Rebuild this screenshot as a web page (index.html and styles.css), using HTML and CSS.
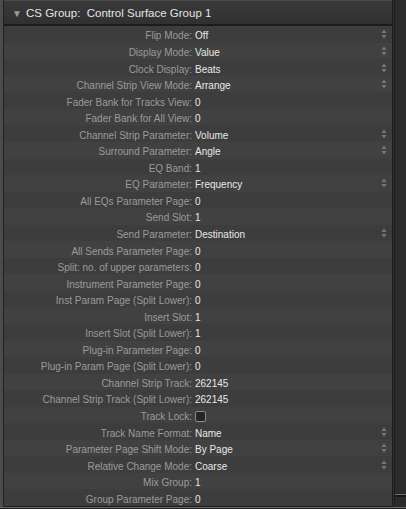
FILE: index.html
```html
<!DOCTYPE html>
<html>
<head>
<meta charset="utf-8">
<link rel="stylesheet" href="styles.css">
</head>
<body>
<div class="window">
  <div class="panel">
    <div class="header"><span class="tri">&#9660;</span><span class="title">CS Group:&nbsp; Control Surface Group 1</span></div>
    <div class="rows">
      <div class="row"><span class="lbl">Flip Mode:</span><span class="val">Off</span><span class="step"><svg width="6" height="10" viewBox="0 0 6 10"><path d="M3 0.5 L5.5 4 H0.5 Z M3 9.5 L5.5 6 H0.5 Z" fill="#777"/></svg></span></div>
      <div class="row"><span class="lbl">Display Mode:</span><span class="val">Value</span><span class="step"><svg width="6" height="10" viewBox="0 0 6 10"><path d="M3 0.5 L5.5 4 H0.5 Z M3 9.5 L5.5 6 H0.5 Z" fill="#777"/></svg></span></div>
      <div class="row"><span class="lbl">Clock Display:</span><span class="val">Beats</span><span class="step"><svg width="6" height="10" viewBox="0 0 6 10"><path d="M3 0.5 L5.5 4 H0.5 Z M3 9.5 L5.5 6 H0.5 Z" fill="#777"/></svg></span></div>
      <div class="row"><span class="lbl">Channel Strip View Mode:</span><span class="val">Arrange</span><span class="step"><svg width="6" height="10" viewBox="0 0 6 10"><path d="M3 0.5 L5.5 4 H0.5 Z M3 9.5 L5.5 6 H0.5 Z" fill="#777"/></svg></span></div>
      <div class="row"><span class="lbl">Fader Bank for Tracks View:</span><span class="val">0</span></div>
      <div class="row"><span class="lbl">Fader Bank for All View:</span><span class="val">0</span></div>
      <div class="row"><span class="lbl">Channel Strip Parameter:</span><span class="val">Volume</span><span class="step"><svg width="6" height="10" viewBox="0 0 6 10"><path d="M3 0.5 L5.5 4 H0.5 Z M3 9.5 L5.5 6 H0.5 Z" fill="#777"/></svg></span></div>
      <div class="row"><span class="lbl">Surround Parameter:</span><span class="val">Angle</span><span class="step"><svg width="6" height="10" viewBox="0 0 6 10"><path d="M3 0.5 L5.5 4 H0.5 Z M3 9.5 L5.5 6 H0.5 Z" fill="#777"/></svg></span></div>
      <div class="row"><span class="lbl">EQ Band:</span><span class="val">1</span></div>
      <div class="row"><span class="lbl">EQ Parameter:</span><span class="val">Frequency</span><span class="step"><svg width="6" height="10" viewBox="0 0 6 10"><path d="M3 0.5 L5.5 4 H0.5 Z M3 9.5 L5.5 6 H0.5 Z" fill="#777"/></svg></span></div>
      <div class="row"><span class="lbl">All EQs Parameter Page:</span><span class="val">0</span></div>
      <div class="row"><span class="lbl">Send Slot:</span><span class="val">1</span></div>
      <div class="row"><span class="lbl">Send Parameter:</span><span class="val">Destination</span><span class="step"><svg width="6" height="10" viewBox="0 0 6 10"><path d="M3 0.5 L5.5 4 H0.5 Z M3 9.5 L5.5 6 H0.5 Z" fill="#777"/></svg></span></div>
      <div class="row"><span class="lbl">All Sends Parameter Page:</span><span class="val">0</span></div>
      <div class="row"><span class="lbl">Split: no. of upper parameters:</span><span class="val">0</span></div>
      <div class="row"><span class="lbl">Instrument Parameter Page:</span><span class="val">0</span></div>
      <div class="row"><span class="lbl">Inst Param Page (Split Lower):</span><span class="val">0</span></div>
      <div class="row"><span class="lbl">Insert Slot:</span><span class="val">1</span></div>
      <div class="row"><span class="lbl">Insert Slot (Split Lower):</span><span class="val">1</span></div>
      <div class="row"><span class="lbl">Plug-in Parameter Page:</span><span class="val">0</span></div>
      <div class="row"><span class="lbl">Plug-in Param Page (Split Lower):</span><span class="val">0</span></div>
      <div class="row"><span class="lbl">Channel Strip Track:</span><span class="val">262145</span></div>
      <div class="row"><span class="lbl">Channel Strip Track (Split Lower):</span><span class="val">262145</span></div>
      <div class="row"><span class="lbl">Track Lock:</span><span class="val"><span class="check"></span></span></div>
      <div class="row"><span class="lbl">Track Name Format:</span><span class="val">Name</span><span class="step"><svg width="6" height="10" viewBox="0 0 6 10"><path d="M3 0.5 L5.5 4 H0.5 Z M3 9.5 L5.5 6 H0.5 Z" fill="#777"/></svg></span></div>
      <div class="row"><span class="lbl">Parameter Page Shift Mode:</span><span class="val">By Page</span><span class="step"><svg width="6" height="10" viewBox="0 0 6 10"><path d="M3 0.5 L5.5 4 H0.5 Z M3 9.5 L5.5 6 H0.5 Z" fill="#777"/></svg></span></div>
      <div class="row"><span class="lbl">Relative Change Mode:</span><span class="val">Coarse</span><span class="step"><svg width="6" height="10" viewBox="0 0 6 10"><path d="M3 0.5 L5.5 4 H0.5 Z M3 9.5 L5.5 6 H0.5 Z" fill="#777"/></svg></span></div>
      <div class="row"><span class="lbl">Mix Group:</span><span class="val">1</span></div>
      <div class="row"><span class="lbl">Group Parameter Page:</span><span class="val">0</span></div>
    </div>
  </div>
  <div class="strip"><div class="strip-end"></div></div>
</div>
</body>
</html>
```

FILE: styles.css
```css
html, body {
  margin: 0;
  padding: 0;
  background: #1e1e1e;
}
body {
  width: 406px;
  height: 509px;
  overflow: hidden;
  font-family: "Liberation Sans", Arial, sans-serif;
}
.window {
  display: flex;
  height: 507px;
  border-bottom: 1px solid #6a6a6a;
}
.panel {
  width: 389px;
  border-left: 3px solid #4c4c4c;
  box-shadow: inset 1px 0 0 #1f1f1f;
  border-right: 1px solid #1b1b1b;
  background: #3c3c3c;
  display: flex;
  flex-direction: column;
}
.header {
  height: 24px;
  border-top: 1px solid #4a4a4a;
  border-bottom: 2px solid #1c1c1c;
  background: linear-gradient(#3a3a3a, #303030);
  display: flex;
  align-items: center;
  padding-left: 8px;
  margin-left: 1px;
  color: #e4e4e4;
}
.tri {
  font-size: 10px;
  color: #9a9a9a;
  width: 14px;
  margin-top: 1px;
}
.title {
  font-size: 11.5px;
  white-space: pre;
}
.rows {
  margin-left: 1px;
  border-bottom: 1px solid #1c1c1c;
}
.row {
  box-sizing: border-box;
  height: 16.55px;
  padding-top: 3px;
  display: grid;
  grid-template-columns: 188px 1fr 16px;
  align-items: center;
  font-size: 10px;
  background: #3d3d3d;
}
.row:nth-child(even) {
  background: #414141;
}
.lbl {
  text-align: right;
  color: #9b9b9b;
  white-space: nowrap;
}
.val {
  color: #e8e8e8;
  padding-left: 3px;
  white-space: nowrap;
  display: flex;
  align-items: center;
}
.step {
  grid-column: 3;
  display: flex;
  justify-content: center;
  align-items: center;
  margin-top: -3px;
}
.step svg {
  display: block;
}
.check {
  display: inline-block;
  width: 9px;
  height: 9px;
  border: 1px solid #8a8a8a;
  border-radius: 2px;
  background: #262626;
}
.strip {
  flex: 1;
  border-left: 1px solid #2f2f2f;
  box-shadow: inset 1px 0 0 #1d1d1d;
  background: #2b2b2b;
  position: relative;
}
.strip-end {
  position: absolute;
  left: 1px;
  right: 0;
  top: 494px;
  height: 1px;
  background: #6e6e6e;
  border-bottom: 2px solid #171717;
}
```
